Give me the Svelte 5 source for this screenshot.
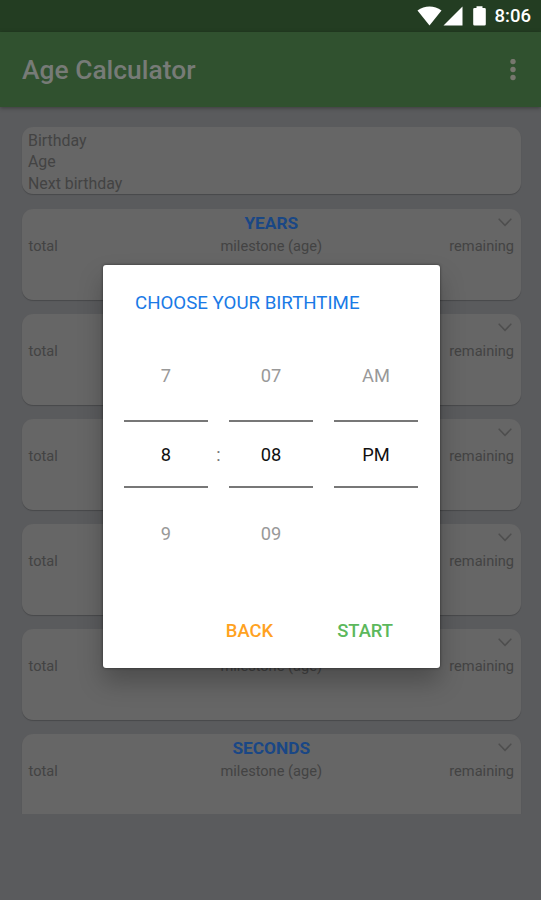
<script lang="ts">
	const summary = ['Birthday', 'Age', 'Next birthday'];

	// cards under the dialog only carry the texts that stay in view
	const units = [
		{ title: 'YEARS', milestone: 'milestone (age)' },
		{ title: '', milestone: '' },
		{ title: '', milestone: '' },
		{ title: '', milestone: '' },
		{ title: '', milestone: 'milestone (age)' },
		{ title: 'SECONDS', milestone: 'milestone (age)' }
	];

	const hours = ['7', '8', '9'];
	const minutes = ['07', '08', '09'];
	const periods = ['AM', 'PM', ''];
</script>

{#snippet wheel(values: string[])}
	<div class="wheel">
		<span class="value">{values[0]}</span>
		<span class="value selected">{values[1]}</span>
		<span class="value">{values[2]}</span>
	</div>
{/snippet}

<div class="screen">
	<div class="status-bar">
		<svg class="wifi" width="25" height="20" viewBox="0 0 25 20">
			<path d="M0.5 4.6 C7.5 -1 17.5 -1 24.5 4.6 L12.5 19.4 Z" fill="#fff" />
		</svg>
		<svg class="signal" width="20" height="20" viewBox="0 0 20 20">
			<path d="M0.5 19.5 L19.5 0.5 V19.5 Z" fill="#fff" />
		</svg>
		<svg class="battery" width="13" height="20" viewBox="0 0 13 20">
			<path d="M3.5 2 V0.2 H9.5 V2 H11.5 Q12.8 2 12.8 3.3 V18.3 Q12.8 19.6 11.5 19.6 H1.5 Q0.2 19.6 0.2 18.3 V3.3 Q0.2 2 1.5 2 Z" fill="#fff" />
		</svg>
		<span class="clock">8:06</span>
	</div>

	<header class="app-bar">
		<h1>Age Calculator</h1>
		<svg width="6" height="22" viewBox="0 0 6 22" fill="#77776e">
			<circle cx="3" cy="2.5" r="2.7" />
			<circle cx="3" cy="10.5" r="2.7" />
			<circle cx="3" cy="18.5" r="2.7" />
		</svg>
	</header>

	<main>
		<section class="card summary">
			{#each summary as label}
				<div>{label}</div>
			{/each}
		</section>

		{#each units as unit}
			<section class="card unit">
				<div class="row title">
					<span></span>
					<h2>{unit.title}</h2>
					<svg width="14" height="9" viewBox="0 0 14 9" fill="none" stroke="#4e4e4e" stroke-width="1.5">
						<path d="M0.7 0.8 L7 7.3 L13.3 0.8" />
					</svg>
				</div>
				<div class="row labels">
					<span>total</span>
					<span>{unit.milestone}</span>
					<span>remaining</span>
				</div>
			</section>
		{/each}
	</main>

	<div class="dialog" role="dialog">
		<h3>CHOOSE YOUR BIRTHTIME</h3>
		<div class="picker">
			{@render wheel(hours)}
			<span class="colon">:</span>
			{@render wheel(minutes)}
			<span></span>
			{@render wheel(periods)}
		</div>
		<div class="actions">
			<button class="back">BACK</button>
			<button class="start">START</button>
		</div>
	</div>
</div>

<style>
	:global(body) {
		background: #5a5b5d;
	}

	.screen {
		position: relative;
		width: 541px;
		height: 900px;
		overflow: hidden;
		background: #5a5b5d;
		font-family: Roboto, sans-serif;
	}

	h1,
	h2,
	h3 {
		margin: 0;
		font-weight: 500;
	}

	.status-bar {
		display: flex;
		align-items: center;
		justify-content: flex-end;
		box-sizing: border-box;
		height: 32px;
		padding-right: 10px;
		background: #233d22;
	}

	.signal {
		margin-left: 1px;
	}

	.battery {
		margin-left: 10px;
	}

	.clock {
		margin-left: 9px;
		color: #fff;
		font-size: 18.5px;
		font-weight: 500;
		line-height: 34px;
	}

	.app-bar {
		display: flex;
		align-items: center;
		justify-content: space-between;
		box-sizing: border-box;
		height: 75px;
		padding: 0 25px 0 22px;
		background: #30512f;
		box-shadow: 0 1px 4px rgba(0, 0, 0, 0.35);
	}

	h1 {
		color: #777b77;
		font-size: 26.4px;
		line-height: 76px;
	}

	main {
		display: flex;
		flex-direction: column;
		gap: 14px;
		box-sizing: border-box;
		height: 707px;
		padding: 20px 20.5px 0 22px;
		overflow: hidden;
	}

	.card {
		flex-shrink: 0;
		box-sizing: border-box;
		border-radius: 11px;
		background: #666;
		box-shadow: 0 1px 1px rgba(0, 0, 0, 0.2);
		color: #434343;
	}

	.summary {
		height: 67px;
		padding: 3px 6px;
		font-size: 15.9px;
		line-height: 21.3px;
	}

	.unit {
		height: 91px;
		padding: 4px 6.5px;
	}

	.summary + .unit {
		margin-top: 1px;
	}

	.row {
		display: grid;
		grid-template-columns: 1fr auto 1fr;
	}

	.row > :last-child {
		justify-self: end;
	}

	.row svg {
		margin: 5px 2px 0 0;
	}

	.title {
		height: 20px;
	}

	h2 {
		color: #1a4785;
		font-size: 17.3px;
		font-weight: 700;
		line-height: 20px;
	}

	.labels {
		font-size: 14.6px;
		line-height: 26px;
	}

	.dialog {
		position: absolute;
		top: 265px;
		left: 103px;
		box-sizing: border-box;
		width: 337px;
		height: 403px;
		padding: 26px 22px 0 21px;
		border-radius: 3px;
		background: #fff;
		box-shadow:
			0 0 3px rgba(0, 0, 0, 0.5),
			0 14px 24px rgba(0, 0, 0, 0.25);
	}

	h3 {
		padding-left: 11px;
		color: #1a7ae6;
		font-size: 18.7px;
		font-weight: 400;
		line-height: 24px;
		white-space: nowrap;
	}

	.picker {
		display: grid;
		grid-template-columns: 84px 1fr 84px 1fr 84px;
		margin-top: 21px;
	}

	.wheel {
		display: flex;
		flex-direction: column;
		align-items: stretch;
		text-align: center;
	}

	.value {
		height: 79px;
		color: #999;
		font-size: 18.3px;
		line-height: 80px;
	}

	.selected {
		box-sizing: border-box;
		height: 68px;
		margin: 5px 0 6px;
		border: solid #777;
		border-width: 2px 0;
		color: #111;
		line-height: 66px;
	}

	.colon {
		align-self: center;
		color: #777;
		font-size: 18px;
		text-align: center;
	}

	.actions {
		display: flex;
		justify-content: flex-end;
		gap: 64px;
		margin-top: 46px;
		padding-right: 25px;
	}

	button {
		padding: 0;
		border: 0;
		background: none;
		font: 500 18.4px/24px Roboto, sans-serif;
	}

	.back {
		color: #ffa21f;
	}

	.start {
		color: #5cb85c;
	}
</style>
